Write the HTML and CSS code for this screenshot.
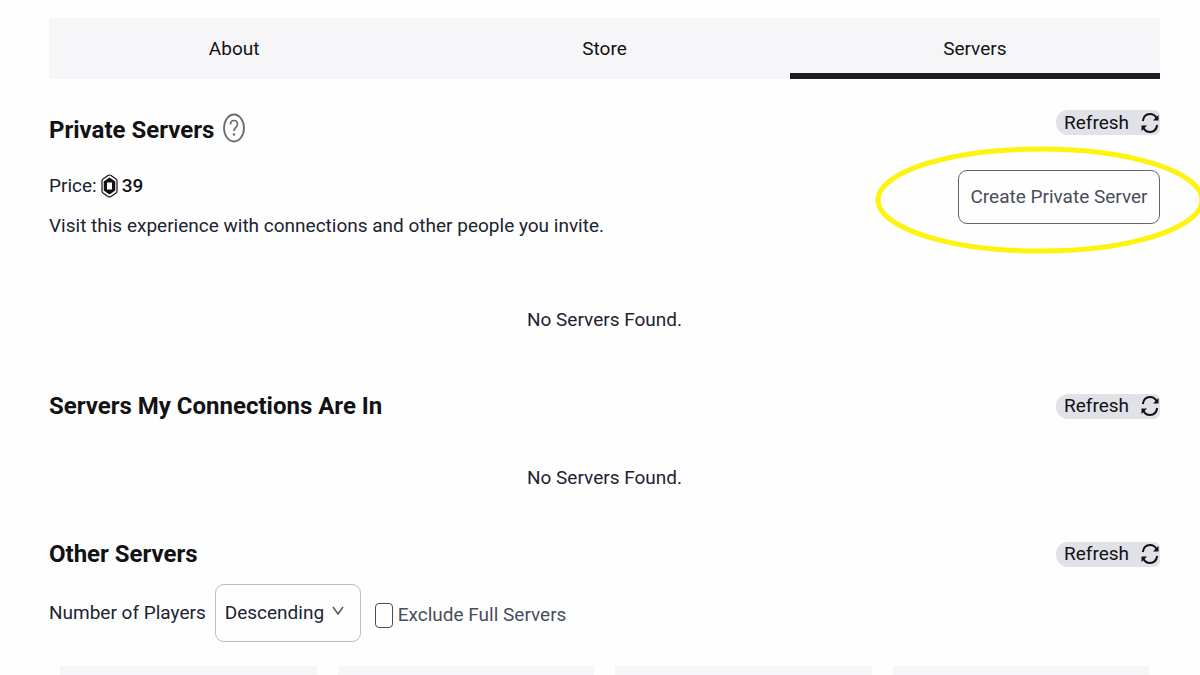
FILE: index.html
```html
<!DOCTYPE html>
<html lang="en">

<head>
    <meta charset="UTF-8">
    <meta name="viewport" content="width=device-width, initial-scale=1.0">
    <title>Servers</title>
    <link rel="stylesheet" href="styles.css">
</head>

<body>
    <!-- shared icon -->
    <svg class="sprite" aria-hidden="true">
        <symbol id="icon-refresh" viewBox="0 0 18 22">
            <path d="M1.800 9C2.500 4.500 5.500 2 9 2c3 0 5.200 1.500 6.500 4M16.200 13c-.7 4.500-3.700 7-7.200 7-3 0-5.200-1.500-6.500-4" fill="none" stroke="currentColor" stroke-width="2" />
            <path d="M17.500 3V8.500H12zM.5 19V13.500H6z" fill="currentColor" />
        </symbol>
    </svg>

    <div class="page">
        <nav class="tabs">
            <a class="tab" href="#about">About</a>
            <a class="tab" href="#store">Store</a>
            <a class="tab active" href="#servers">Servers</a>
        </nav>

        <section class="section private">
            <div class="section-head">
                <h2>Private Servers</h2>
                <svg class="help" viewBox="0 0 22 30" aria-hidden="true">
                    <ellipse cx="11" cy="15" rx="10" ry="13.500" fill="none" stroke="currentColor" stroke-width="1.800" />
                    <path d="M7.500 11.500c0-2.500 1.500-4 3.500-4s3.500 1.500 3.500 3.700c0 3-3.500 3.300-3.500 6.800" fill="none" stroke="currentColor" stroke-width="1.700" />
                    <circle cx="11" cy="21.500" r="1.200" fill="currentColor" />
                </svg>
                <button class="refresh" type="button">Refresh <svg class="refresh-icon"><use href="#icon-refresh" /></svg></button>
            </div>
            <div class="private-info">
                <div class="details">
                    <p class="price">Price:
                        <svg class="robux" viewBox="0 0 17 24" aria-hidden="true">
                            <path d="M8.500 1c.6 0 1 .2 1.500.5l4.700 3.300c.9.600 1.300 1.300 1.300 2.300v9.800c0 1-.4 1.700-1.300 2.300L10 22.500c-1 .6-2 .6-3 0l-4.700-3.300C1.400 18.600 1 17.900 1 16.900V7.100c0-1 .4-1.700 1.300-2.300L7 1.500c.5-.3.900-.5 1.500-.5z" fill="none" stroke="currentColor" stroke-width="1.200" />
                            <path d="M8.500 4.500l5 3.300v8.400l-5 3.300-5-3.300V7.800z" fill="currentColor" stroke="currentColor" stroke-width="1.500" stroke-linejoin="round" />
                            <path d="M6 8.500h5v7H6z" fill="#fff" />
                        </svg>
                        <span class="amount">39</span>
                    </p>
                    <p>Visit this experience with connections and other people you invite.</p>
                </div>
                <div class="create">
                    <button class="create-btn" type="button">Create Private Server</button>
                    <svg class="marker" viewBox="0 0 330 108" aria-hidden="true">
                        <ellipse cx="165" cy="54" rx="162" ry="51" />
                    </svg>
                </div>
            </div>
            <p class="empty">No Servers Found.</p>
        </section>

        <section class="section connections">
            <div class="section-head">
                <h2>Servers My Connections Are In</h2>
                <button class="refresh" type="button">Refresh <svg class="refresh-icon"><use href="#icon-refresh" /></svg></button>
            </div>
            <p class="empty">No Servers Found.</p>
        </section>

        <section class="section others">
            <div class="section-head">
                <h2>Other Servers</h2>
                <button class="refresh" type="button">Refresh <svg class="refresh-icon"><use href="#icon-refresh" /></svg></button>
            </div>
            <form class="filters">
                <label for="players">Number of Players</label>
                <span class="select-wrap">
                    <select id="players">
                        <option>Descending</option>
                        <option>Ascending</option>
                    </select>
                    <svg class="chevron" viewBox="0 0 12 10" aria-hidden="true">
                        <path d="M1 1l5 7 5-7" />
                    </svg>
                </span>
                <input type="checkbox" id="exclude">
                <label class="muted" for="exclude">Exclude Full Servers</label>
            </form>
            <div class="cards">
                <div class="card"></div>
                <div class="card"></div>
                <div class="card"></div>
                <div class="card"></div>
            </div>
        </section>
    </div>
</body>

</html>
```

FILE: styles.css
```css
* {
    box-sizing: border-box;
}

html {
    overflow-x: hidden;
    scrollbar-width: none;
}

body {
    margin: 0;
    background: #fefefe;
    color: #202330;
    font: 19px/28px Roboto, "Liberation Sans", sans-serif;
}

h2,
p {
    margin: 0;
}

button,
select {
    font: inherit;
    color: inherit;
}

.sprite {
    display: none;
}

.page {
    padding: 18px 40px 0 49px;
    overflow: hidden;
}

/* tabs */
.tabs {
    display: flex;
    background: #f6f6f8;
}

.tab {
    flex: 1;
    height: 61px;
    line-height: 62px;
    text-align: center;
    text-decoration: none;
    color: #121215;
}

.tab.active {
    border-bottom: 6px solid #1b1b24;
}

/* section header */
.section-head {
    display: flex;
    align-items: center;
    height: 40px;
}

.section-head h2 {
    font-size: 24px;
    line-height: 40px;
    font-weight: 700;
    color: #121215;
}

.help {
    width: 22px;
    height: 30px;
    margin: 0 0 4px 9px;
    color: #6b6b6e;
}

.refresh {
    display: flex;
    align-items: center;
    justify-content: space-between;
    width: 104px;
    height: 25px;
    margin-left: auto;
    padding: 0 1px 0 8px;
    border: 0;
    border-radius: 12px 6px 6px 12px;
    background: #e1e1e8;
    color: #121215;
}

.refresh-icon {
    width: 18px;
    height: 22px;
}

.empty {
    text-align: center;
}

/* private servers */
.private {
    padding-top: 31px;
}

.private .refresh {
    align-self: flex-start;
}

.private-info {
    display: flex;
    justify-content: space-between;
    padding-top: 20px;
}

.price {
    display: flex;
    align-items: center;
    gap: 4px;
    margin: 2px 0 12px;
}

.robux {
    width: 17px;
    height: 24px;
    color: #121215;
}

.amount {
    color: #121215;
    font-weight: 500;
}

.create {
    position: relative;
}

.create-btn {
    width: 202px;
    height: 54px;
    padding: 0;
    border: 1px solid #62646f;
    border-radius: 9px;
    background: #fefefe;
    color: #494d5a;
}

/* highlight ring round the create button */
.marker {
    position: absolute;
    top: -24px;
    left: -83px;
    width: 330px;
    height: 108px;
    pointer-events: none;
}

.marker ellipse {
    fill: none;
    stroke: #fff20d;
    stroke-width: 5;
}

.private .empty {
    padding-top: 66px;
}

/* connections */
.connections {
    padding-top: 52px;
}

.connections .empty {
    padding-top: 38px;
}

/* other servers */
.others {
    padding-top: 42px;
}

.filters {
    display: flex;
    align-items: center;
    padding-top: 10px;
}

.select-wrap {
    position: relative;
    margin: 0 14px 0 9px;
}

.select-wrap select {
    display: block;
    width: 146px;
    height: 58px;
    padding: 0 9px;
    border: 1px solid #bbbcc8;
    border-radius: 9px;
    background: #fefefe;
    appearance: none;
}

.chevron {
    position: absolute;
    top: 22px;
    right: 17px;
    width: 12px;
    height: 10px;
    fill: none;
    stroke: #55565c;
    stroke-width: 1.5;
    pointer-events: none;
}

.filters input {
    width: 18px;
    height: 25px;
    margin: 4px 5px 0 0;
    border: 1px solid #494d5a;
    border-radius: 4px;
    background: #fefefe;
    appearance: none;
}

.filters input:checked {
    background: #494d5a;
}

.muted {
    padding-top: 4px;
    color: #494d5a;
}

.cards {
    display: grid;
    grid-template-columns: repeat(4, 1fr);
    gap: 21px;
    padding: 24px 11px;
}

.card {
    height: 240px;
    background: #f6f6f8;
}
```
